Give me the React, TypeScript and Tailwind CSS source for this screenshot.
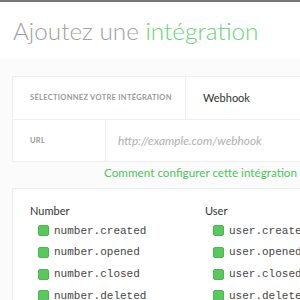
import React from "react";

const Item = ({ label }: { label: string }) => (
  <div className="flex items-center h-[21.7px]">
    <span className="w-[11px] h-[11px] rounded-[2px] bg-[#5ac85e] border border-[#4bb84f] shrink-0" />
    <span className="ml-[5px] text-[11px] text-[#444] whitespace-nowrap" style={{ fontFamily: '"Liberation Mono", monospace' }}>
      {label}
    </span>
  </div>
);

export default function App() {
  return (
    <div className="w-[300px] h-[300px] overflow-hidden bg-[#fbfbfb] border-t-2 border-[#777]" style={{ fontFamily: '"Lato", "Open Sans", sans-serif' }}>
      <div className="bg-white h-[56px] pl-[13px] pt-[14px]">
        <h1 className="text-[24.3px] font-light leading-[30px] whitespace-nowrap text-[#a0a0a0]">
          Ajoutez une <span className="text-[#66d377]">intégration</span>
        </h1>
      </div>
      <div className="pl-[12px] pt-[18px]">
        <div className="w-[320px] bg-white border border-[#eee]">
          <div className="flex h-[43px] border-b border-[#eee]">
            <div className="w-[173px] flex items-center pl-[17px] border-r border-[#eee]">
              <span className="text-[7.5px] font-bold tracking-[0.3px] text-[#999] whitespace-nowrap">SÉLECTIONNEZ VOTRE INTÉGRATION</span>
            </div>
            <div className="flex items-center pl-[17px] text-[11px] text-[#333]">Webhook</div>
          </div>
          <div className="flex h-[41px]">
            <div className="w-[93px] flex items-center pl-[17px] border-r border-[#eee]">
              <span className="text-[7.5px] font-bold tracking-[0.3px] text-[#999]">URL</span>
            </div>
            <div className="flex items-center pl-[12px] text-[11.8px] italic text-[#b0b0b0] whitespace-nowrap">http://example.com/webhook</div>
          </div>
        </div>
        <div className="h-[26px] pb-[4px] flex items-center justify-end pr-[3px] text-[11.7px] text-[#4cc45a] whitespace-nowrap">
          Comment configurer cette intégration
        </div>
        <div className="w-[320px] bg-white border border-[#eee] pt-[13px] pl-[17px] flex">
          <div className="w-[175px]">
            <div className="text-[11px] text-[#333] h-[18px] leading-[18px]">Number</div>
            <div className="pl-[8px]">
              <Item label="number.created" />
              <Item label="number.opened" />
              <Item label="number.closed" />
              <Item label="number.deleted" />
            </div>
          </div>
          <div>
            <div className="text-[11px] text-[#333] h-[18px] leading-[18px]">User</div>
            <div className="pl-[8px]">
              <Item label="user.created" />
              <Item label="user.opened" />
              <Item label="user.closed" />
              <Item label="user.deleted" />
            </div>
          </div>
        </div>
      </div>
    </div>
  );
}
